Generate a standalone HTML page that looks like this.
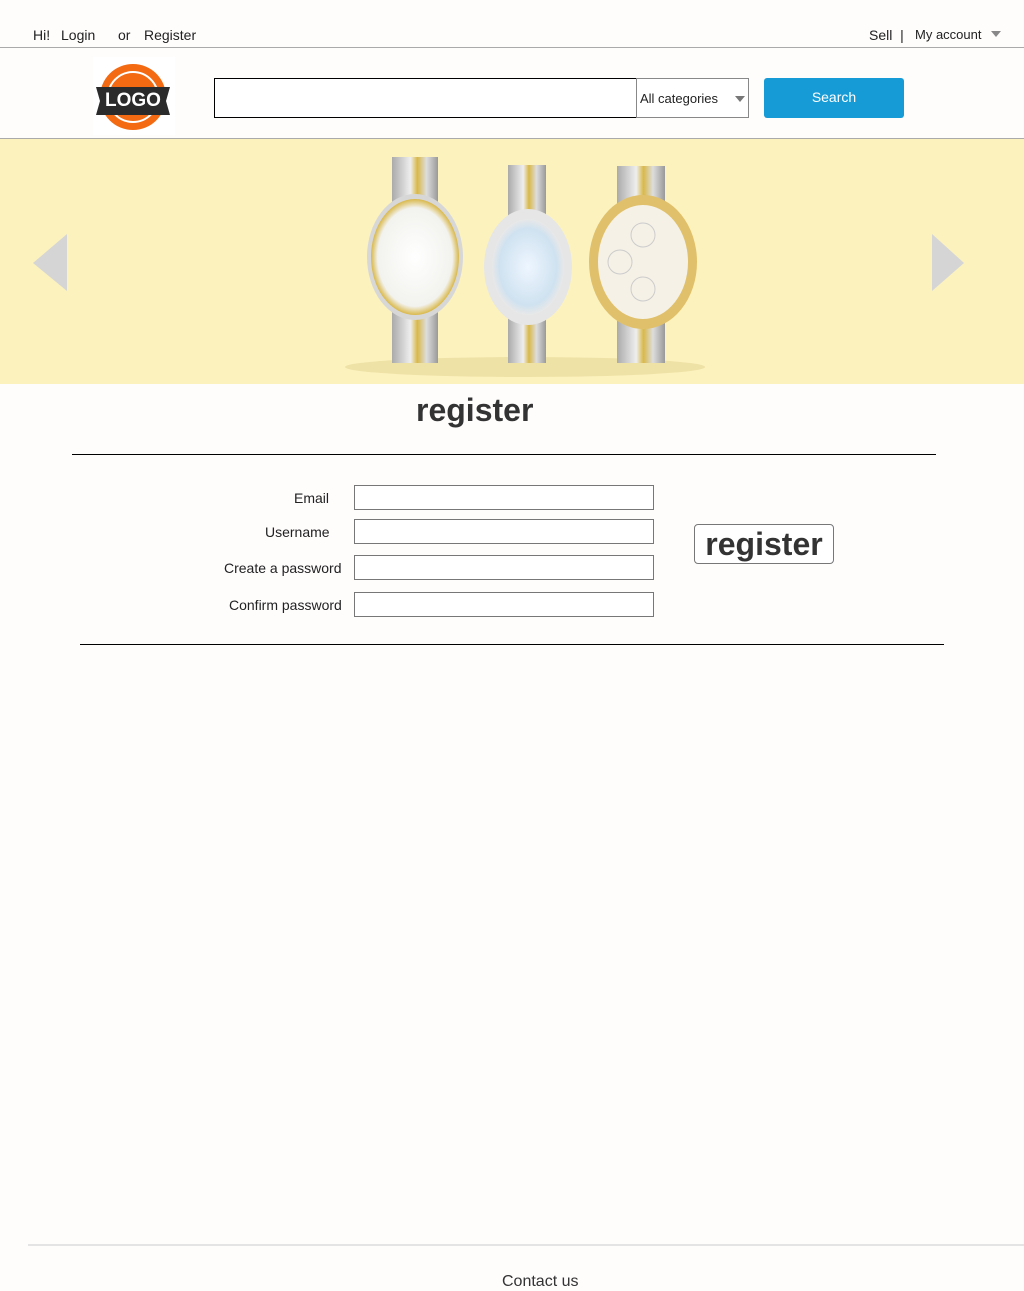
<!DOCTYPE html>
<html><head><meta charset="utf-8"><style>
*{margin:0;padding:0;box-sizing:border-box}
body{width:1024px;height:1291px;background:#fffcfc;font-family:"Liberation Sans",sans-serif;color:#222;position:relative;overflow:hidden}
.a{position:absolute}
.t{font-size:14px}
input{position:absolute;border:1px solid #777;background:#fff;height:25px;width:300px;left:354px}
</style></head><body>
<div class="a t" style="left:33px;top:27px">Hi!</div>
<div class="a t" style="left:61px;top:27px">Login</div>
<div class="a t" style="left:118px;top:27px">or</div>
<div class="a t" style="left:144px;top:27px">Register</div>
<div class="a t" style="left:869px;top:27px">Sell&nbsp; |</div>
<div class="a" style="left:915px;top:27px;font-size:13px">My account</div>
<div class="a" style="left:991px;top:31px;border-left:5px solid transparent;border-right:5px solid transparent;border-top:6px solid #888"></div>
<div class="a" style="left:0;top:47px;width:1024px;height:1px;background:#aaa"></div>
<svg class="a" style="left:93px;top:57px" width="82" height="78" viewBox="0 0 82 78">
<rect width="82" height="78" fill="#fff"/>
<circle cx="40" cy="40" r="33" fill="#f36a12"/>
<circle cx="40" cy="40" r="25" fill="none" stroke="#fff" stroke-width="2"/>
<polygon points="3,30 77,30 73,44 77,58 3,58 7,44" fill="#2b2b2b"/>
<text x="40" y="49" text-anchor="middle" fill="#fff" font-family="Liberation Sans" font-weight="bold" font-size="19">LOGO</text>
</svg>
<div class="a" style="left:214px;top:78px;width:423px;height:40px;border:1px solid #000;background:#fff"></div>
<div class="a" style="left:636px;top:78px;width:113px;height:40px;border:1px solid #888;background:#fff;font-size:13px;padding:12px 0 0 3px">All categories</div>
<div class="a" style="left:735px;top:96px;border-left:5px solid transparent;border-right:5px solid transparent;border-top:6px solid #777"></div>
<div class="a" style="left:764px;top:78px;width:140px;height:40px;background:#179bd7;border-radius:3px;color:#fff;font-size:14px;text-align:center;line-height:39px">Search</div>
<div class="a" style="left:0;top:138px;width:1024px;height:1px;background:#aaa"></div>
<div class="a" style="left:0;top:139px;width:1024px;height:245px;background:#fcf2be"></div>
<svg class="a" style="left:0;top:139px" width="1024" height="245">
<defs><linearGradient id="s" x1="0" x2="1"><stop offset="0" stop-color="#aaa"/><stop offset=".4" stop-color="#eee"/><stop offset=".55" stop-color="#d9b84a"/><stop offset=".75" stop-color="#ddd"/><stop offset="1" stop-color="#999"/></linearGradient>
<radialGradient id="f"><stop offset="0" stop-color="#fff"/><stop offset=".85" stop-color="#f2f2ee"/><stop offset="1" stop-color="#d9b84a"/></radialGradient>
<radialGradient id="f2"><stop offset="0" stop-color="#eef6ff"/><stop offset=".8" stop-color="#cfe2f0"/><stop offset="1" stop-color="#e8e8e8"/></radialGradient></defs>
<ellipse cx="525" cy="228" rx="180" ry="10" fill="#efe2a6"/>
<polygon points="33,124 67,95 67,152" fill="#d5d5d5"/>
<polygon points="932,95 964,124 932,152" fill="#d5d5d5"/>
<rect x="392" y="18" width="46" height="206" fill="url(#s)"/>
<ellipse cx="415" cy="118" rx="48" ry="63" fill="#d7d7d7"/>
<ellipse cx="415" cy="118" rx="44" ry="58" fill="url(#f)"/>
<rect x="508" y="26" width="38" height="198" fill="url(#s)"/>
<ellipse cx="528" cy="128" rx="44" ry="58" fill="#e6e6e6"/>
<ellipse cx="528" cy="128" rx="36" ry="48" fill="url(#f2)"/>
<rect x="617" y="27" width="48" height="197" fill="url(#s)"/>
<ellipse cx="643" cy="123" rx="54" ry="67" fill="#e0c06a"/>
<ellipse cx="643" cy="123" rx="45" ry="57" fill="#f5f1e6"/>
<circle cx="643" cy="96" r="12" fill="none" stroke="#ccc"/><circle cx="620" cy="123" r="12" fill="none" stroke="#ccc"/><circle cx="643" cy="150" r="12" fill="none" stroke="#ccc"/>
</svg>
<div class="a" style="left:416px;top:392px;font-size:32px;font-weight:bold;color:#333">register</div>
<div class="a" style="left:72px;top:454px;width:864px;height:1px;background:#000"></div>
<div class="a t" style="left:294px;top:490px">Email</div>
<div class="a t" style="left:265px;top:524px">Username</div>
<div class="a t" style="left:224px;top:560px">Create a password</div>
<div class="a t" style="left:229px;top:597px">Confirm password</div>
<input style="top:485px"><input style="top:519px"><input style="top:555px"><input style="top:592px">
<div class="a" style="left:694px;top:524px;width:140px;height:40px;border:1px solid #777;border-radius:4px;background:#fff;font-size:32px;font-weight:bold;color:#333;text-align:center;line-height:38px">register</div>
<div class="a" style="left:80px;top:644px;width:864px;height:1px;background:#000"></div>
<div class="a" style="left:28px;top:1244px;width:996px;height:2px;background:#e4e4e4"></div>
<div class="a" style="left:502px;top:1273px;font-size:16px;color:#333">Contact us</div>
</body></html>
